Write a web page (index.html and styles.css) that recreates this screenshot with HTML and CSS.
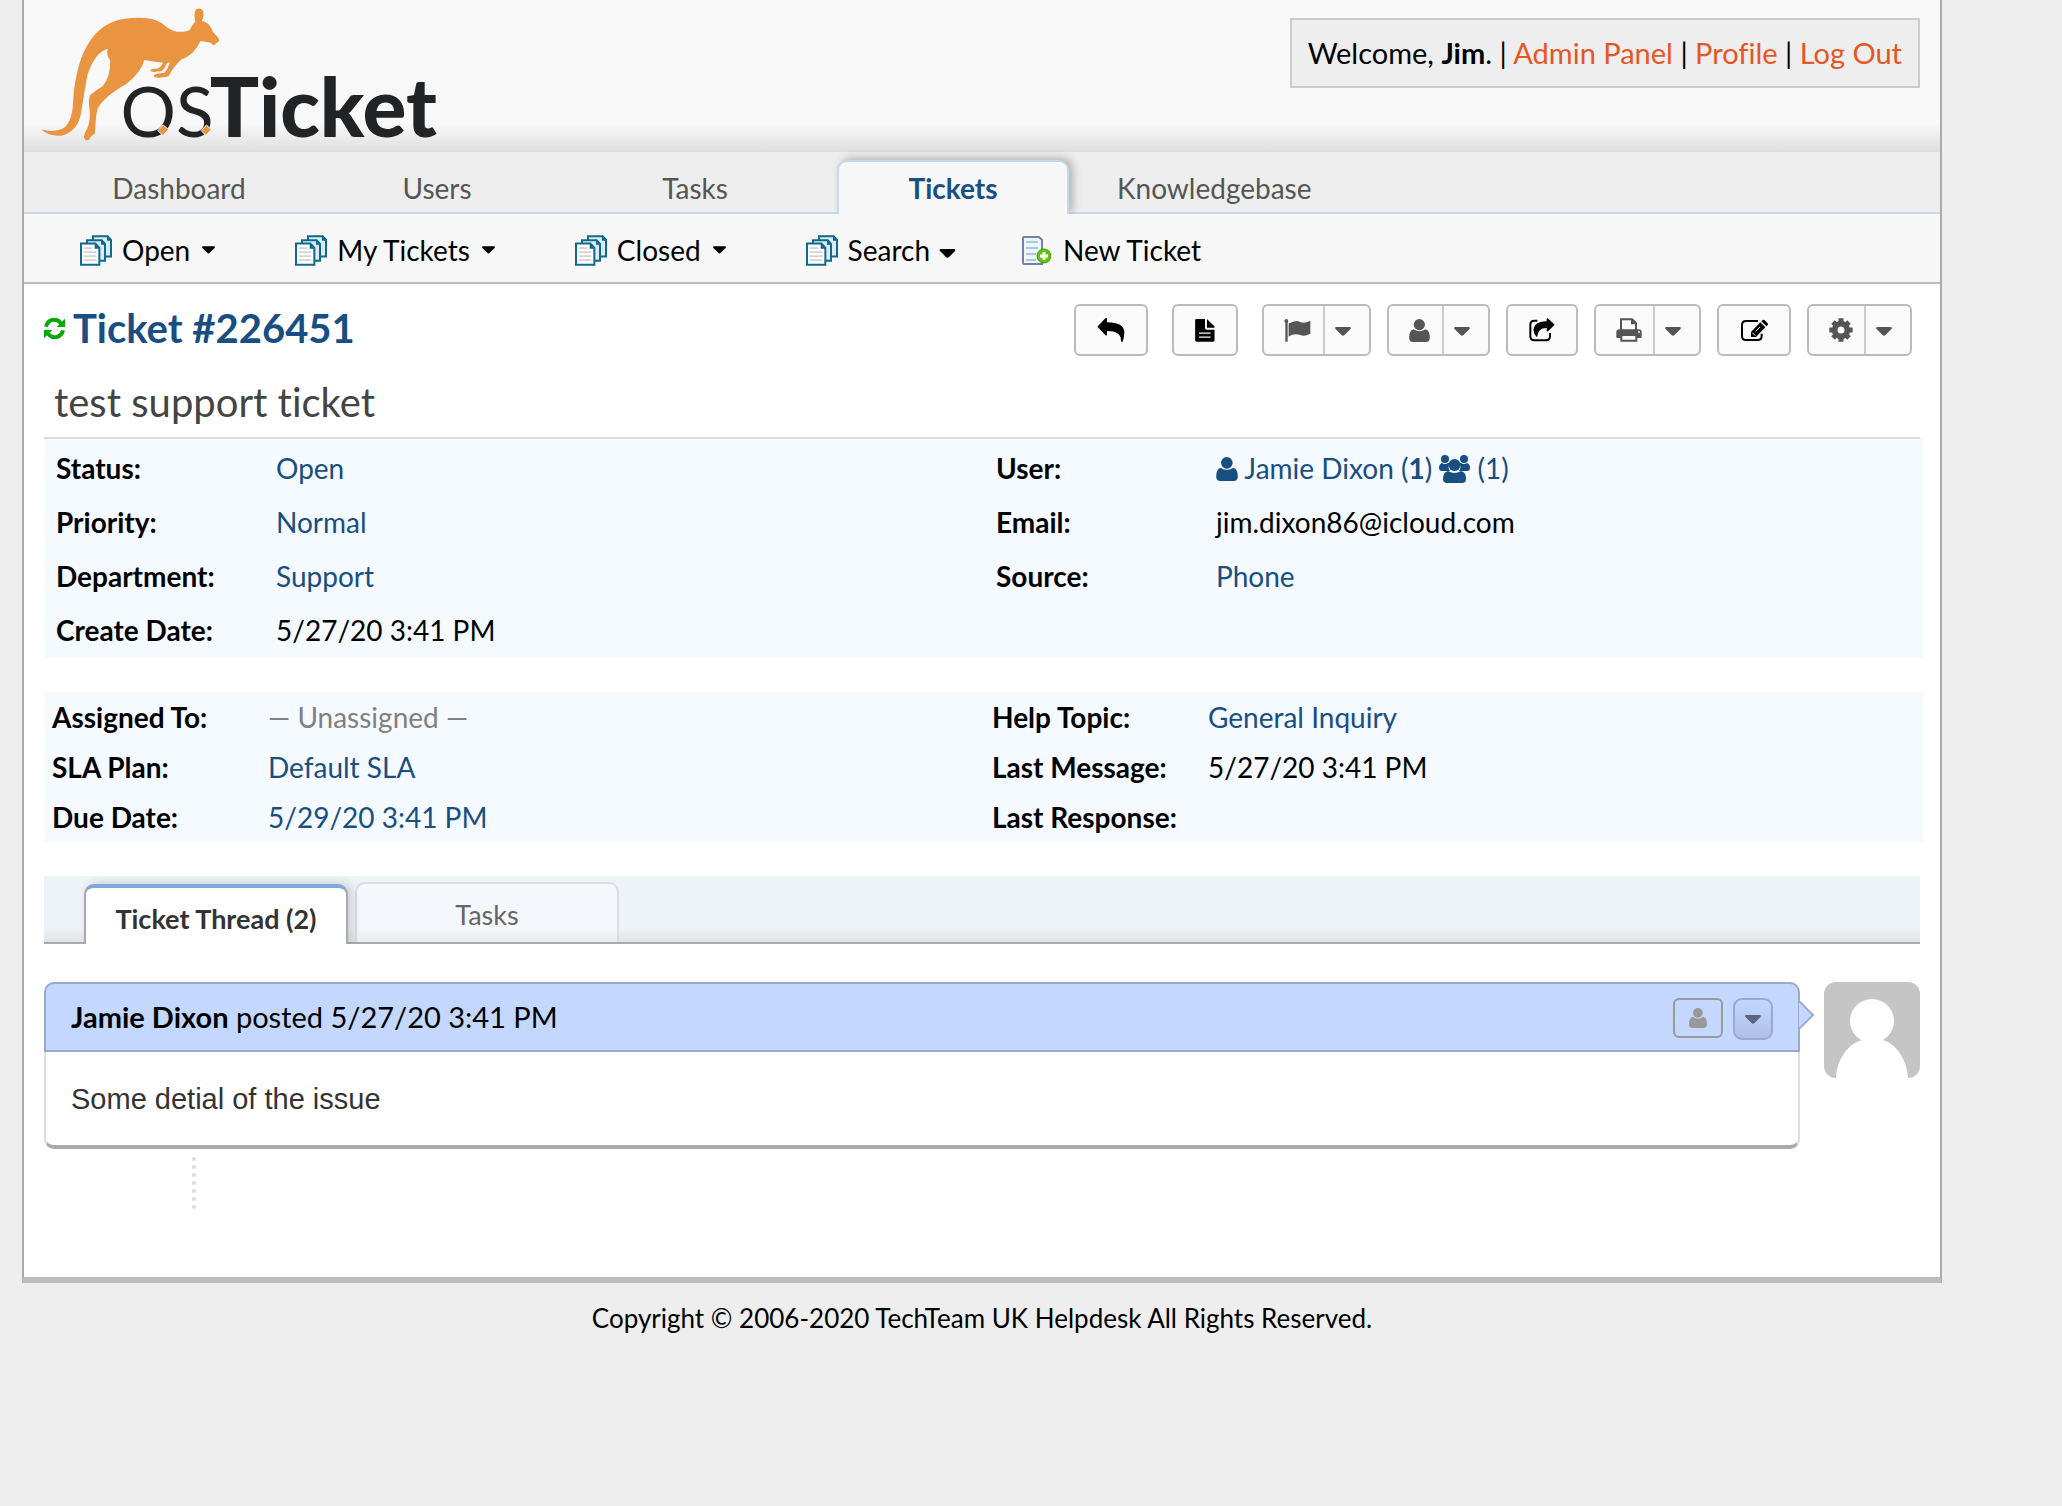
FILE: index.html
```html
<!DOCTYPE html>
<html lang="en">
<head>
    <meta charset="utf-8">
    <meta name="viewport" content="width=device-width, initial-scale=1">
    <title>Ticket #226451 - osTicket Staff Control Panel</title>
    <link rel="stylesheet" href="styles.css">
</head>
<body>
    <!-- Shared icons -->
    <svg class="sprite" aria-hidden="true">
        <symbol id="icon-docs" viewBox="240 702 96 92">
            <g fill="#dfeaf0" stroke="#0f6b8d" stroke-width="6">
                <path d="M279 705H323L333 716V766H279Z"/>
                <path d="M261 717H305L315 728V779H261Z"/>
                <path fill="#fff" d="M243 727H286L298 740V791H243Z"/>
            </g>
            <path fill="#0f6b8d" d="M284 726V743H299V738L287 726ZM303 716V731H316V727L306 716ZM321 704V719H334V715L324 704Z"/>
            <path stroke="#d3d3d3" stroke-width="5" d="M251 741H276M251 753H289M251 765H289M251 777H289"/>
        </symbol>
        <symbol id="icon-caret" viewBox="0 0 16 9">
            <path d="M1 0H15Q16.500 .5 15.500 2L9.500 8Q8 9.500 6.500 8L.5 2Q-.5 .5 1 0Z"/>
        </symbol>
        <symbol id="icon-user" viewBox="1047 119 63 70">
            <circle cx="1078" cy="136" r="17"/>
            <path d="M1060 150Q1078 163 1097 150Q1110 153 1110 176Q1110 189 1098 189H1059Q1047 189 1047 176Q1047 153 1060 150Z"/>
        </symbol>
    </svg>

    <div class="container">
        <header class="header">
            <a href="#" class="logo" aria-label="osTicket">
                <svg viewBox="120 20 1192 402">
                    <path fill="#e99440" d="M123 388Q165 398 190 384Q216 365 219 310C222 250 235 180 262 135Q304 58 395 53Q455 49 485 68Q512 92 530 94Q560 96 570 88Q578 70 587 63Q580 42 588 27Q600 20 609 30Q614 45 606 62Q628 64 639 94L656 113Q661 126 648 128L646 134Q638 135 632 127Q615 124 602 122Q583 164 545 177Q520 200 506 228Q480 235 462 230Q460 222 472 220L494 217Q505 205 510 186Q500 187 495 200Q488 215 475 213Q455 218 451 210Q455 204 470 205Q482 203 490 187Q460 184 433 179Q425 215 380 250Q310 290 293 325Q287 345 285 400Q270 410 268 418Q255 424 252 412Q252 400 262 385Q272 360 269 330Q264 300 270 285Q290 268 308 258Q332 230 331 180Q318 165 323 145Q285 155 262 225C254 270 250 300 242 345Q230 395 185 406Q150 410 123 388Z"/>
                    <text class="logo-os" x="362" y="411">OS</text>
                    <text class="logo-ticket" x="630" y="411">Ticket</text>
                    <path fill="#e99440" stroke="#f8f8f8" stroke-width="3" d="M474 391L490 374L506 388L489 406ZM604 391L620 374L634 388L618 406Z"/>
                </svg>
            </a>
            <p class="info">Welcome, <strong>Jim</strong>. | <a href="#">Admin Panel</a> | <a href="#">Profile</a> | <a href="#">Log Out</a></p>
        </header>

        <nav class="nav">
            <a href="#" class="nav-tab">Dashboard</a>
            <a href="#" class="nav-tab">Users</a>
            <a href="#" class="nav-tab">Tasks</a>
            <a href="#" class="nav-tab active">Tickets</a>
            <a href="#" class="nav-tab">Knowledgebase</a>
        </nav>

        <nav class="sub-nav">
            <a href="#" class="item-open"><svg class="docs"><use href="#icon-docs"/></svg>Open<svg class="caret"><use href="#icon-caret"/></svg></a>
            <a href="#" class="item-mine"><svg class="docs"><use href="#icon-docs"/></svg>My Tickets<svg class="caret"><use href="#icon-caret"/></svg></a>
            <a href="#" class="item-closed"><svg class="docs"><use href="#icon-docs"/></svg>Closed<svg class="caret"><use href="#icon-caret"/></svg></a>
            <a href="#" class="item-search"><svg class="docs"><use href="#icon-docs"/></svg>Search<svg class="caret caret-large"><use href="#icon-caret"/></svg></a>
            <a href="#" class="item-new">
                <svg class="new-doc" viewBox="0 0 29 29">
                    <path fill="#eef6fb" stroke="#7283a8" stroke-width="2" d="M2 1H17L20 4V28H2Q1 28 1 27V2Q1 1 2 1Z"/>
                    <path stroke="#a3cbe0" stroke-width="2" d="M4 6H16M4 12H16M4 18H14M4 24H14"/>
                    <circle cx="22" cy="20" r="7" fill="#62c20c" stroke="#489a0b"/>
                    <path stroke="#fff" stroke-width="3" d="M22 16V24M18 20H26"/>
                </svg>New Ticket</a>
        </nav>

        <main class="content">
            <div class="title-row">
                <h1>
                    <a href="#">
                        <svg class="refresh" viewBox="132 120 63 63">
                            <g fill="none" stroke="#0a0" stroke-width="12">
                                <path d="M138 146C144 122 172 118 184 138"/>
                                <path d="M189 157C183 181 155 185 143 165"/>
                            </g>
                            <path fill="#0a0" d="M195 122V147H170ZM132 181V156H157Z"/>
                        </svg>
                        Ticket #226451</a>
                </h1>
                <div class="toolbar">
                    <button type="button" class="btn btn-reply" aria-label="Reply">
                        <svg width="28" height="24" viewBox="111 117 84 72"><path d="M112 143L136 118Q140 115 141 120V130Q193 130 193 160Q193 175 188 188Q184 190 183 186Q184 156 141 156V167Q140 172 136 168Z"/></svg>
                    </button>
                    <button type="button" class="btn btn-note" aria-label="Post internal note">
                        <svg width="20" height="23" viewBox="402 119 60 70"><path d="M406 119H432V146Q432 152 438 152H461V184Q461 188 457 188H406Q402 188 402 184V123Q402 119 406 119ZM438 119L461 142V146H438Z"/><path stroke="#fafafa" stroke-width="4" d="M414 162H449M414 174H449"/></svg>
                    </button>
                    <button type="button" class="btn btn-split btn-status" aria-label="Change status">
                        <span class="btn-main"><svg width="27" height="23" viewBox="674 119 80 70"><circle cx="680" cy="125" r="6"/><path d="M677 125H684V188H677ZM687 133Q710 120 722 128Q735 134 753 124V164Q735 174 722 168Q705 162 687 172Z"/></svg></span>
                        <span class="btn-drop"><svg class="drop"><use href="#icon-caret"/></svg></span>
                    </button>
                    <button type="button" class="btn btn-split btn-assign" aria-label="Assign">
                        <span class="btn-main"><svg width="21" height="23"><use href="#icon-user"/></svg></span>
                        <span class="btn-drop"><svg class="drop"><use href="#icon-caret"/></svg></span>
                    </button>
                    <button type="button" class="btn btn-transfer" aria-label="Transfer">
                        <svg width="26" height="24" viewBox="83 113 78 72"><path fill="none" stroke="#000" stroke-width="6" d="M108 121H99Q87 121 87 133V168Q87 180 99 180H134Q146 180 146 168V158"/><path d="M136 116Q138 112 141 115L160 133L141 152Q138 155 136 151V143Q110 142 107 171Q89 153 102 134Q112 123 136 123Z"/></svg>
                    </button>
                    <button type="button" class="btn btn-split btn-print" aria-label="Print">
                        <span class="btn-main"><svg width="26" height="24" viewBox="346 118 78 72"><path fill="#fafafa" stroke="#555" stroke-width="6" d="M361 155V122H394L406 134V155"/><path d="M391 120V137H408V133L395 120Z"/><path d="M356 152H414Q423 152 423 161V176Q423 178 420 178H350Q347 178 347 176V161Q347 152 356 152Z"/><path fill="#fafafa" stroke="#555" stroke-width="6" d="M362 169H407V186H362Z"/><circle cx="415" cy="160" r="3" fill="#fafafa"/></svg></span>
                        <span class="btn-drop"><svg class="drop"><use href="#icon-caret"/></svg></span>
                    </button>
                    <button type="button" class="btn btn-edit" aria-label="Edit">
                        <svg width="27" height="23" viewBox="717 118 81 67"><path fill="none" stroke="#000" stroke-width="6" d="M768 123H732Q720 123 720 135V168Q720 180 732 180H767Q779 180 779 168V161"/><path d="M747 171V156L775 127L790 142L762 171ZM778 124L782 120Q785 118 788 121L797 130Q799 133 797 135L793 139Z"/><path stroke="#fafafa" stroke-width="3" d="M751 158L760 167M761 154L774 141"/></svg>
                    </button>
                    <button type="button" class="btn btn-split btn-more" aria-label="More">
                        <span class="btn-main"><svg width="24" height="24" viewBox="-36 -36 72 72"><g fill="none" stroke="#555"><circle r="19" stroke-width="17"/><path stroke-width="15" d="M0-35V-22M0 35V22M-35 0H-22M35 0H22M-24-24L-16-16M24 24L16 16M-24 24L-16 16M24-24L16-16"/></g></svg></span>
                        <span class="btn-drop"><svg class="drop"><use href="#icon-caret"/></svg></span>
                    </button>
                </div>
            </div>

            <h2 class="subject">test support ticket</h2>

            <div class="ticket-info">
                <table>
                    <tr><th scope="row">Status:</th><td><a href="#">Open</a></td></tr>
                    <tr><th scope="row">Priority:</th><td><a href="#">Normal</a></td></tr>
                    <tr><th scope="row">Department:</th><td><a href="#">Support</a></td></tr>
                    <tr><th scope="row">Create Date:</th><td>5/27/20 3:41 PM</td></tr>
                </table>
                <table>
                    <tr>
                        <th scope="row">User:</th>
                        <td>
                            <a href="#"><svg class="user"><use href="#icon-user"/></svg> Jamie Dixon (<b>1</b>)</a>
                            <a href="#"><svg class="group" viewBox="0 0 31 28"><circle cx="6" cy="4" r="4"/><circle cx="25" cy="4" r="4"/><path d="M3 8Q6 10 9 8L11 8Q8 12 11 16H3Q0 16 0 13Q0 9 3 8ZM28 8Q25 10 22 8L20 8Q23 12 20 16H28Q31 16 31 13Q31 9 28 8Z"/><circle cx="15.500" cy="10" r="6"/><path d="M9 16Q15.500 20 22 16Q27 17 27 24Q27 28 23 28H8Q4 28 4 24Q4 17 9 16Z"/></svg> (1)</a>
                        </td>
                    </tr>
                    <tr><th scope="row">Email:</th><td>jim.dixon86@icloud.com</td></tr>
                    <tr><th scope="row">Source:</th><td><a href="#">Phone</a></td></tr>
                </table>
            </div>

            <div class="ticket-info compact">
                <table>
                    <tr><th scope="row">Assigned To:</th><td class="faded">— Unassigned —</td></tr>
                    <tr><th scope="row">SLA Plan:</th><td><a href="#">Default SLA</a></td></tr>
                    <tr><th scope="row">Due Date:</th><td><a href="#">5/29/20 3:41 PM</a></td></tr>
                </table>
                <table>
                    <tr><th scope="row">Help Topic:</th><td><a href="#">General Inquiry</a></td></tr>
                    <tr><th scope="row">Last Message:</th><td>5/27/20 3:41 PM</td></tr>
                    <tr><th scope="row">Last Response:</th><td></td></tr>
                </table>
            </div>

            <div class="tabs">
                <a href="#" class="tab active">Ticket Thread (2)</a>
                <a href="#" class="tab">Tasks</a>
            </div>

            <div class="thread">
                <article class="entry">
                    <div class="entry-header">
                        <p><b>Jamie Dixon</b> posted 5/27/20 3:41 PM</p>
                        <button type="button" class="entry-user" aria-label="Collaborator"><svg width="18" height="20"><use href="#icon-user"/></svg></button>
                        <button type="button" class="entry-more" aria-label="Entry actions"><svg class="drop"><use href="#icon-caret"/></svg></button>
                    </div>
                    <div class="entry-body">Some detial of the issue</div>
                </article>
                <svg class="avatar" viewBox="0 0 96 96">
                    <path fill="#c5c5c5" d="M0 0H96V96H0Z"/>
                    <circle cx="48" cy="39" r="22" fill="#fff"/>
                    <path fill="#fff" d="M12 96C13 77 24 62 38 58L36 54H61L59 58C72 62 83 77 84 96Z"/>
                </svg>
            </div>
            <div class="thread-line"></div>
        </main>
    </div>

    <footer class="footer">Copyright © 2006-2020 TechTeam UK Helpdesk All Rights Reserved.</footer>
</body>
</html>
```
FILE: styles.css
```css
* {
    box-sizing: border-box;
}
body {
    margin: 0;
    padding: 0 120px 0 22px;
    background: #eee;
    color: #000;
    font-family: Lato, sans-serif;
    font-size: 28px;
    font-variant-ligatures: none;
    line-height: 34px;
}
a {
    color: #184e81;
    text-decoration: none;
}
p, h1, h2 {
    margin: 0;
}
.sprite {
    display: none;
}
.container {
    border: 2px solid #aaa;
    border-top: 0;
    border-bottom: 6px solid #bbb;
    background: #fff;
}

/* Header */
.header {
    display: flex;
    justify-content: space-between;
    align-items: flex-start;
    height: 152px;
    padding: 0 20px 0 16px;
    background: #f8f8f8 linear-gradient(to top, #ddd 2px, #e0e0e0 2px, #f8f8f8 28px);
}
.logo svg {
    display: block;
    width: 397px;
    height: 134px;
    margin-top: 7px;
    overflow: visible;
}
.logo text {
    fill: #222324;
    font-family: Lato, sans-serif;
}
.logo-os {
    font-size: 208px;
}
.logo-ticket {
    font-size: 246px;
    font-weight: 900;
}
.info {
    margin-top: 18px;
    padding: 16px;
    border: 2px solid #ccc;
    background: #eee;
    font-size: 29px;
}
.info a {
    color: #e65524;
}

/* Navigation */
.nav {
    display: flex;
    gap: 26px;
    height: 62px;
    padding: 8px 39px 0;
    border-bottom: 2px solid #c5d9ec;
    background: #eee;
}
.nav-tab {
    min-width: 232px;
    height: 54px;
    padding: 9px 20px 0;
    border: 2px solid transparent;
    border-bottom: 0;
    color: #555;
    text-align: center;
}
.nav-tab.active {
    border-color: #c5d9ec;
    border-radius: 10px 10px 0 0;
    background: #f7f7f7;
    box-shadow: 4px -2px 8px rgba(0, 0, 0, 0.25);
    clip-path: inset(-14px -14px 0 -14px);
    color: #184e81;
    font-weight: bold;
}
.sub-nav {
    display: flex;
    height: 70px;
    padding: 19px 56px 0;
    border-bottom: 2px solid #bbb;
    background: #f7f7f7;
}
.sub-nav a {
    display: flex;
    align-items: center;
    height: 34px;
    margin-right: 80px;
    color: #000;
}
.sub-nav .item-search {
    margin-right: 66px;
}
.docs {
    width: 32px;
    height: 31px;
    margin-right: 10px;
}
.new-doc {
    width: 29px;
    height: 29px;
    margin-right: 12px;
}
.caret {
    width: 13px;
    height: 8px;
    margin-left: 12px;
}
.caret-large {
    width: 17px;
    height: 9px;
    margin: 6px 0 0 9px;
}

/* Ticket title */
.content {
    padding: 20px 20px 68px;
}
.title-row {
    display: flex;
    justify-content: space-between;
    align-items: flex-start;
}
h1 {
    font-size: 40px;
    line-height: 48px;
}
h1 a {
    display: flex;
    align-items: center;
    gap: 8px;
}
.refresh {
    width: 21px;
    height: 21px;
}
.toolbar {
    display: flex;
    gap: 16px;
    margin-right: 8px;
}
.btn {
    display: flex;
    align-items: center;
    justify-content: center;
    height: 52px;
    padding: 0;
    border: 2px solid #bbb;
    border-radius: 6px;
    background: #fafafa;
    color: #000;
    cursor: pointer;
}
.btn-reply, .btn-edit {
    width: 74px;
}
.btn-note {
    width: 66px;
}
.btn-reply, .btn-note {
    margin-right: 8px;
}
.btn-transfer {
    width: 72px;
}
.btn-status {
    width: 109px;
}
.btn-assign {
    width: 103px;
}
.btn-print {
    width: 107px;
}
.btn-more {
    width: 105px;
}
.btn-split svg {
    fill: #555;
}
.btn-main, .btn-drop {
    display: flex;
    align-items: center;
    justify-content: center;
    height: 48px;
}
.btn-main {
    flex: 1;
    padding-left: 8px;
}
.btn-drop {
    width: 46px;
    padding: 3px 8px 0 0;
    border-left: 2px solid #ccc;
}
.drop {
    width: 16px;
    height: 9px;
}
.subject {
    margin-top: 22px;
    padding: 0 10px 11px;
    border-bottom: 2px solid #ddd;
    color: #444;
    font-size: 40px;
    font-weight: normal;
    line-height: 48px;
}

/* Ticket details */
.ticket-info {
    display: grid;
    grid-template-columns: 1fr 1fr;
    align-items: start;
    margin-right: -4px;
    padding: 2px 0 0;
    background: #f4faff;
}
.ticket-info.compact {
    margin-top: 35px;
    padding: 0;
}
.ticket-info table {
    border-collapse: collapse;
}
.ticket-info th, .ticket-info td {
    height: 54px;
    padding: 0;
    text-align: left;
    white-space: nowrap;
}
.ticket-info th {
    width: 232px;
    padding-left: 12px;
}
.ticket-info.compact th, .ticket-info.compact td {
    height: 50px;
}
.ticket-info.compact th {
    width: 224px;
    padding-left: 8px;
}
.ticket-info svg {
    fill: #184e81;
}
.user {
    width: 22px;
    height: 24px;
    vertical-align: -2px;
}
.group {
    width: 31px;
    height: 28px;
    vertical-align: -4px;
}
.ticket-info .faded {
    color: #808080;
}

/* Thread tabs */
.tabs {
    display: flex;
    align-items: flex-end;
    gap: 7px;
    height: 68px;
    margin-top: 34px;
    padding-left: 40px;
    border-bottom: 2px solid #aaa;
    background: #eef3f8 linear-gradient(to top, #dfe4e9, #eef3f8 14px);
}
.tab {
    width: 264px;
    height: 60px;
    padding-top: 15px;
    border: 2px solid #ddd;
    border-bottom: 0;
    border-radius: 10px 10px 0 0;
    background: #f4f7fb linear-gradient(to top, #e8ebef, #f4f7fb 14px);
    color: #666;
    font-size: 27px;
    line-height: 32px;
    text-align: center;
}
.tab.active {
    margin-bottom: -2px;
    border-color: #aaa;
    border-top: 4px solid #81a9d7;
    background: #fff;
    box-shadow: 4px -1px 10px rgba(0, 0, 0, 0.15);
    clip-path: inset(-12px -16px 0 -12px);
    color: #333;
    font-weight: bold;
}

/* Thread */
.thread {
    display: flex;
    align-items: flex-start;
    gap: 24px;
    margin-top: 38px;
}
.entry {
    flex: 1;
    font-size: 29px;
}
.entry-header {
    position: relative;
    display: flex;
    align-items: flex-start;
    height: 70px;
    padding: 14px 25px 0;
    border: 2px solid #97aacd;
    border-radius: 10px 10px 0 0;
    background: #c3d7ff;
}
/* Arrow pointing at the avatar */
.entry-header::after {
    content: "";
    position: absolute;
    top: 20px;
    right: -12px;
    width: 20px;
    height: 20px;
    border: 2px solid #97aacd;
    border-left: 0;
    border-bottom: 0;
    background: #c3d7ff;
    clip-path: polygon(0 0, 100% 0, 100% 100%);
    transform: rotate(45deg);
}
.entry-header p {
    flex: 1;
    margin-top: 2px;
}
.entry-header button {
    display: flex;
    align-items: center;
    justify-content: center;
    padding: 0;
    cursor: pointer;
}
.entry-user {
    width: 50px;
    height: 40px;
    margin-right: 10px;
    border: 2px solid #999;
    border-radius: 6px;
    background: transparent;
}
.entry-user svg {
    fill: #999;
}
.entry-more {
    width: 40px;
    height: 42px;
    border: 2px solid #97aacd;
    border-radius: 9px;
    background: linear-gradient(#c3d7ff, #aec0e6);
}
.entry-more svg {
    fill: #5b6679;
}
.entry-body {
    padding: 30px 25px 29px;
    border: 2px solid #ddd;
    border-top: 0;
    border-bottom: 4px solid #aaa;
    border-radius: 0 0 10px 10px;
    color: #333;
    font-family: "Liberation Sans", Arial, sans-serif;
}
.avatar {
    width: 96px;
    height: 96px;
    border-radius: 12px;
}
.thread-line {
    height: 52px;
    margin: 8px 0 0 148px;
    border-left: 4px dotted #ddd;
}

.footer {
    padding: 19px 0;
    font-size: 26px;
    line-height: 32px;
    text-align: center;
}
```
